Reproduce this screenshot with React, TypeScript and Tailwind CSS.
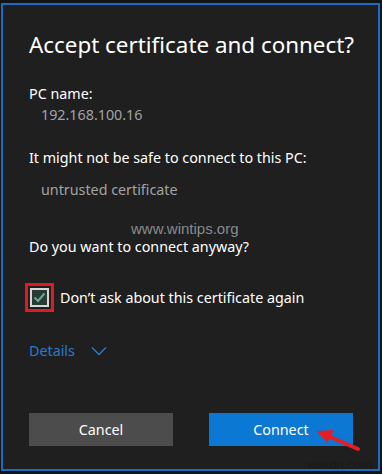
export default function App() {
  return (
    <div className="h-[474px] w-[382px] bg-[#141414] pb-[3px] pl-[1px] pr-[2px] pt-[3px] font-['Noto_Sans',sans-serif]">
      <div className="relative flex h-full flex-col border-2 border-[#1b6cc2] bg-[#1f1f1f] px-[26px] pt-[24px]">
        <h1 className="whitespace-nowrap text-[22.4px] leading-[32px] text-white">Accept certificate and connect?</h1>

        <div className="mt-[23px] text-[14.3px] leading-[20px] text-white">PC name:</div>
        <div className="mt-[1px] pl-[12px] text-[14.3px] leading-[20px] text-[#a3a3a3]">192.168.100.16</div>

        <div className="mt-[23px] text-[14.3px] leading-[20px] text-white">It might not be safe to connect to this PC:</div>
        <div className="mt-[12px] pl-[12px] text-[14.3px] leading-[20px] text-[#a3a3a3]">untrusted certificate</div>

        <div className="relative mt-[37px] text-[14.3px] leading-[20px] text-white">
          <span className="absolute left-[102px] top-[-15px] font-['Liberation_Sans',sans-serif] text-[15px] leading-[14px] text-[#8a8a8a]">
            www.wintips.org
          </span>
          Do you want to connect anyway?
        </div>

        <div className="mt-[26px] flex items-center gap-[6px]">
          <div className="-ml-[4px] flex h-[29px] w-[29px] items-center justify-center border-[3px] border-[#e01b24]">
            <div className="flex h-[19px] w-[19px] items-center justify-center border-2 border-[#d8d8d8] bg-[#2c3a36]">
              <svg width="13" height="11" viewBox="0 0 13 11">
                <path d="M1.5 5.5 L5 9 L11.5 1.5" fill="none" stroke="#5fae8f" strokeWidth="2" />
              </svg>
            </div>
          </div>
          <span className="text-[14.3px] leading-[20px] text-white">Don’t ask about this certificate again</span>
        </div>

        <div className="mt-[29px] flex items-center gap-[16px] text-[14.3px] leading-[20px] text-[#2a7bd0]">
          <span>Details</span>
          <svg width="16" height="10" viewBox="0 0 16 10">
            <path d="M1 1.5 L8 8.5 L15 1.5" fill="none" stroke="#2a7bd0" strokeWidth="1.4" />
          </svg>
        </div>

        <div className="mt-auto mb-[23px] flex justify-between">
          <button className="flex h-[33px] w-[144px] items-center justify-center bg-[#4c4c4c] text-[14.3px] text-white">
            Cancel
          </button>
          <button className="mr-[-1px] flex h-[33px] w-[144px] items-center justify-center bg-[#0b78d4] text-[14.3px] text-white">
            Connect
          </button>
        </div>

        <svg className="absolute left-[311px] top-[421px]" width="50" height="28" viewBox="0 0 50 28">
          <path d="M44 23 L12 9" stroke="#e51e25" strokeWidth="4" strokeLinecap="round" />
          <path d="M3 5 L20 4 L13 17 Z" fill="#e51e25" />
        </svg>
        <span className="absolute left-[304px] top-[450px] font-['Liberation_Sans',sans-serif] text-[13px] text-[#1a1a1a]">
          wsxdn.com
        </span>
      </div>
    </div>
  );
}
